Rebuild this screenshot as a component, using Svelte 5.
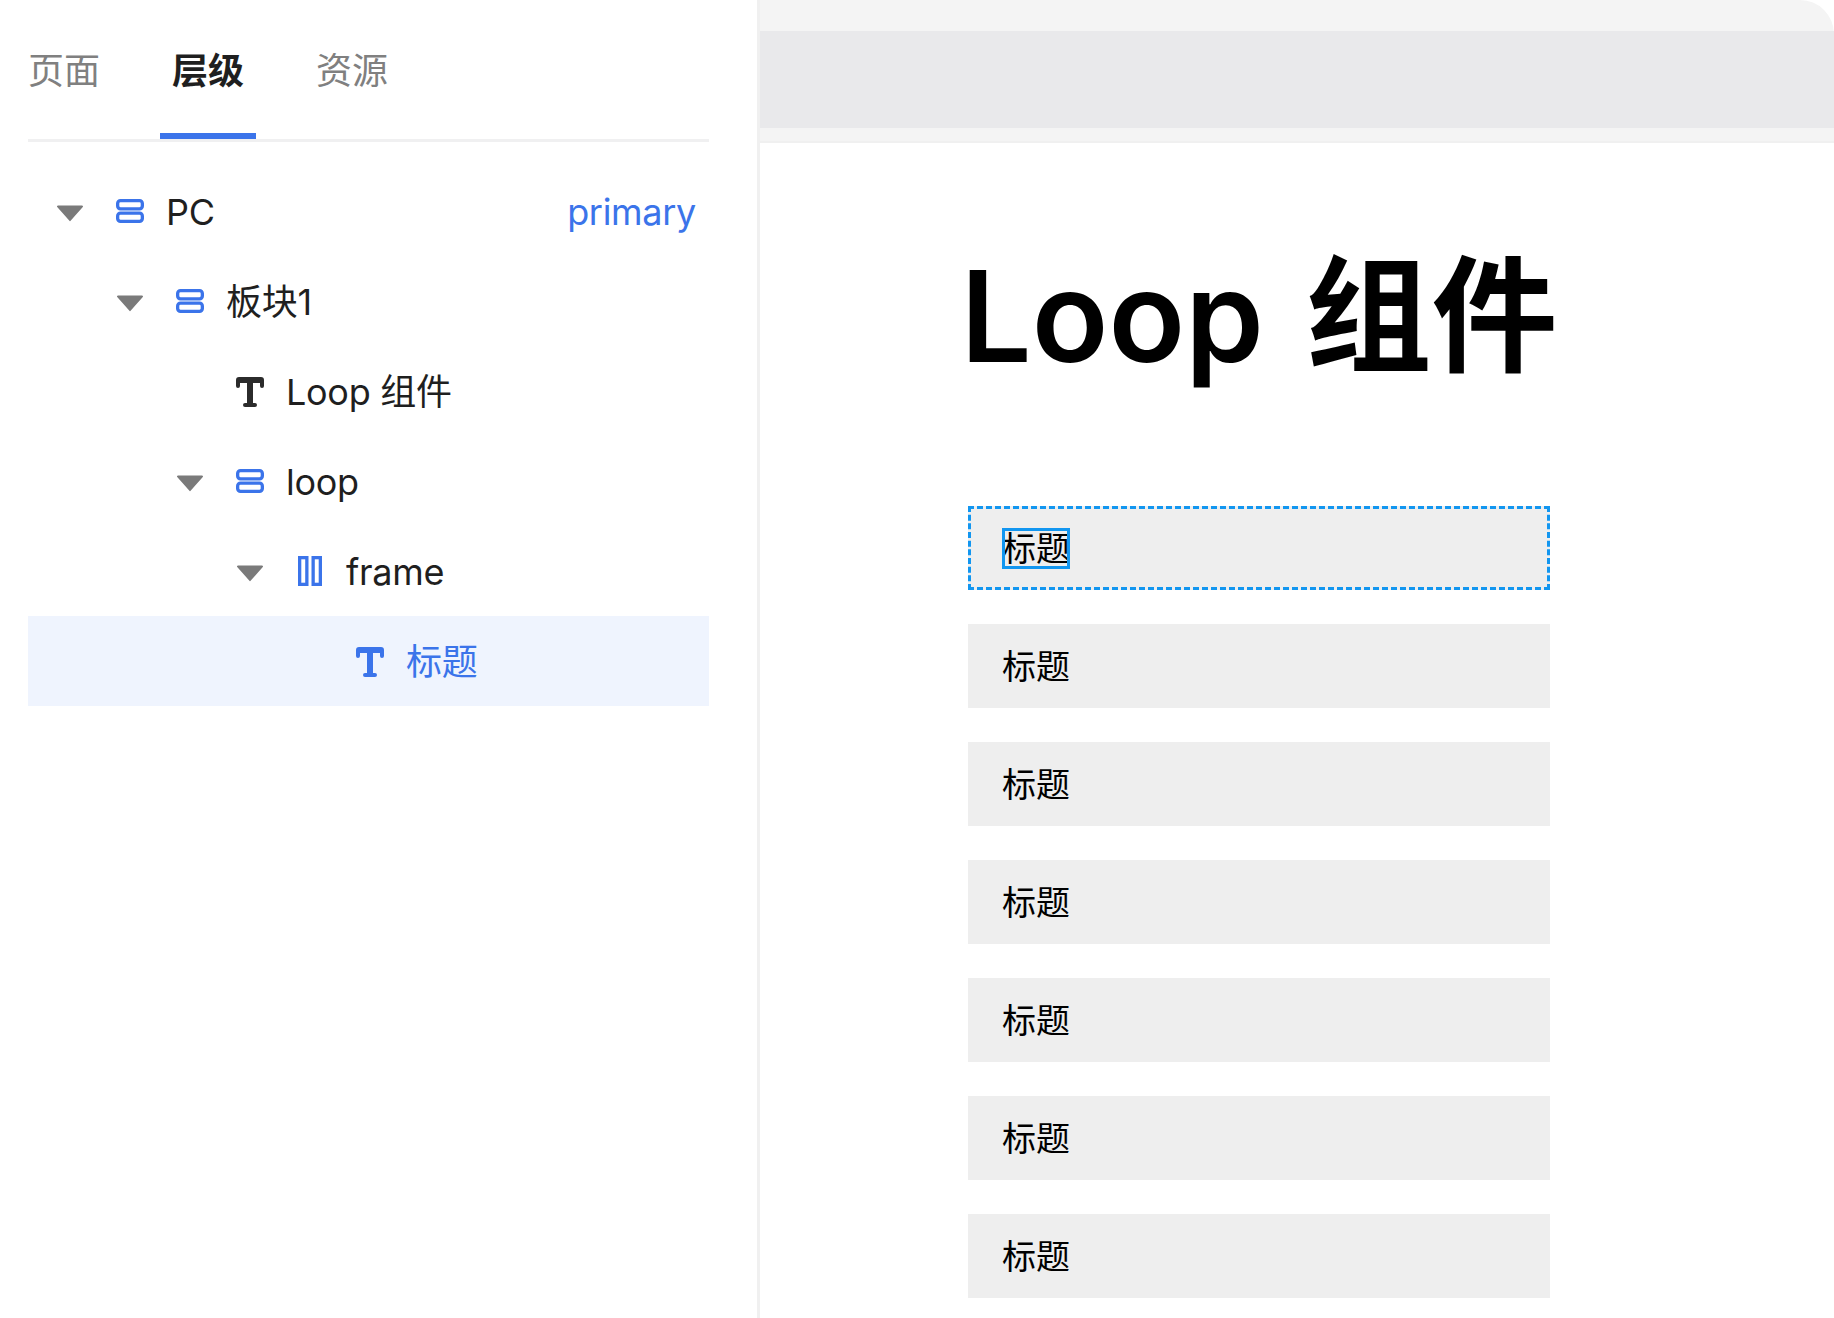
<script>
	const tabs = [
		{ label: '页面', active: false },
		{ label: '层级', active: true },
		{ label: '资源', active: false }
	];

	const nodes = [
		{ label: 'PC', depth: 0, icon: 'rows', arrow: true, tag: 'primary' },
		{ label: '板块1', depth: 1, icon: 'rows', arrow: true },
		{ label: 'Loop 组件', depth: 2, icon: 'text' },
		{ label: 'loop', depth: 2, icon: 'rows', arrow: true },
		{ label: 'frame', depth: 3, icon: 'cols', arrow: true },
		{ label: '标题', depth: 4, icon: 'text', selected: true }
	];

	const items = ['标题', '标题', '标题', '标题', '标题', '标题', '标题'];
</script>

<div class="page">
	<aside class="sidebar">
		<nav class="tabs">
			{#each tabs as tab}
				<span class="tab" class:active={tab.active}>{tab.label}</span>
			{/each}
		</nav>
		<ul class="tree">
			{#each nodes as node}
				<li class="node" class:selected={node.selected} style="padding-left: {node.depth * 60}px">
					<span class="arrow-slot">
						{#if node.arrow}
							<svg width="28" height="18" viewBox="0 0 28 18">
								<path d="M2 1.5h24a1 1 0 0 1 .8 1.6L14.8 16.6a1 1 0 0 1-1.6 0L1.2 3.1A1 1 0 0 1 2 1.5z" fill="#7a7a7a" />
							</svg>
						{/if}
					</span>
					<span class="icon-slot">
						{#if node.icon === 'rows'}
							<svg width="28" height="24" viewBox="0 0 28 24" fill="none" stroke="#3b74ea" stroke-width="3.3">
								<rect x="1.65" y="1.65" width="24.7" height="8.2" rx="2.8" />
								<rect x="1.65" y="14.15" width="24.7" height="8.2" rx="2.8" />
							</svg>
						{:else if node.icon === 'cols'}
							<svg width="24" height="30" viewBox="0 0 24 30" fill="none" stroke="#3b74ea" stroke-width="3.3">
								<rect x="1.65" y="1.65" width="7.2" height="26.7" />
								<rect x="15.15" y="1.65" width="7.2" height="26.7" />
							</svg>
						{:else}
							<svg class="text-icon" width="28" height="30" viewBox="0 0 28 30" fill={node.selected ? '#3b74ea' : '#2b2b2b'}>
								<path d="M3 0h22a3 3 0 0 1 3 3v6a2 2 0 0 1-4 0V6h-7v20h2a2 2 0 0 1 0 4H9a2 2 0 0 1 0-4h2V6H4v3a2 2 0 0 1-4 0V3a3 3 0 0 1 3-3z" />
							</svg>
						{/if}
					</span>
					<span class="label">{node.label}</span>
					{#if node.tag}
						<span class="tag">{node.tag}</span>
					{/if}
				</li>
			{/each}
		</ul>
	</aside>

	<main class="canvas">
		<div class="chrome">
			<div class="chrome-bar"></div>
		</div>
		<div class="content">
			<h1>Loop 组件</h1>
			<div class="list">
				{#each items as item, i}
					<div class="item" class:current={i === 0}>
						<span class="item-text">{item}</span>
					</div>
				{/each}
			</div>
		</div>
	</main>
</div>

<style>
	:global(body) {
		margin: 0;
		background: #fff;
	}
	.page {
		display: flex;
		width: 1834px;
		height: 1318px;
		overflow: hidden;
		font-family: 'Inter', 'Noto Sans CJK SC', sans-serif;
	}
	.sidebar {
		box-sizing: border-box;
		width: 760px;
		flex: none;
		padding: 0 48px 0 28px;
		border-right: 3px solid #f0f0f0;
	}
	.tabs {
		display: flex;
		gap: 72px;
		height: 139px;
		border-bottom: 3px solid #f0f0f1;
	}
	.tab {
		position: relative;
		font-size: 36px;
		line-height: 143px;
		height: 139px;
		color: #808080;
	}
	.tab.active {
		color: #1f1f1f;
		font-weight: 700;
	}
	.tab.active::after {
		content: '';
		position: absolute;
		left: -12px;
		right: -12px;
		bottom: 0;
		height: 6px;
		background: #3b74ea;
	}
	.tree {
		list-style: none;
		margin: 24px 0 0;
		padding: 0;
	}
	.node {
		display: flex;
		align-items: center;
		height: 90px;
		font-size: 36px;
		letter-spacing: -0.3px;
		color: #1f1f1f;
	}
	.node.selected {
		background: #eff4fe;
		color: #3b74ea;
	}
	.arrow-slot {
		display: flex;
		justify-content: center;
		width: 28px;
		margin-left: 28px;
		margin-right: 32px;
		padding-top: 4px;
	}
	.icon-slot {
		display: flex;
		justify-content: center;
		width: 28px;
		margin-right: 22px;
	}
	.text-icon {
		margin-top: 2px;
	}
	.label {
		flex: 1;
		white-space: pre;
		line-height: 44px;
		padding-top: 1px;
	}
	.tag {
		margin-right: 13px;
		line-height: 44px;
		padding-top: 1px;
		color: #3b74ea;
	}
	.canvas {
		flex: 1;
		min-width: 0;
		display: flex;
		flex-direction: column;
	}
	.chrome {
		box-sizing: border-box;
		height: 143px;
		padding-top: 31px;
		background: #f4f4f4;
		border-bottom: 2px solid #f0f0f0;
		border-top-right-radius: 34px;
	}
	.chrome-bar {
		height: 97px;
		background: #e9e9eb;
	}
	.content {
		display: flex;
		flex-direction: column;
		align-items: center;
		padding-right: 76px;
	}
	h1 {
		margin: 73px 0 0;
		font-size: 126px;
		line-height: 200px;
		font-weight: 600;
		word-spacing: 10px;
		color: #000;
		white-space: pre;
	}
	.list {
		display: flex;
		flex-direction: column;
		gap: 34px;
		width: 582px;
		margin-top: 90px;
	}
	.item {
		box-sizing: border-box;
		display: flex;
		align-items: center;
		height: 84px;
		padding-left: 34px;
		background: #eeeeee;
		font-size: 34px;
		color: #000;
	}
	.item-text {
		line-height: 40px;
		padding-top: 1px;
	}
	.item.current {
		outline: 3px dashed #1296f0;
		outline-offset: -3px;
	}
	.item.current .item-text {
		outline: 3px solid #1296f0;
		outline-offset: -3px;
	}
</style>
